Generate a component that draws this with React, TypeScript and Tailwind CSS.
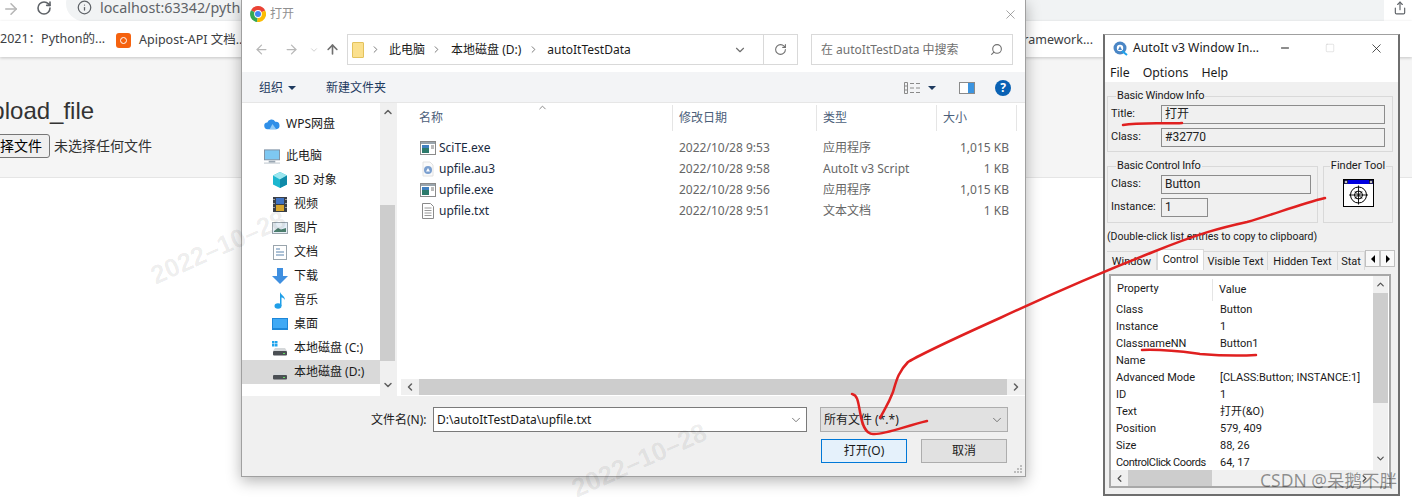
import { ArrowLeft, ArrowRight, ArrowUp, ChevronDown, ChevronLeft, ChevronRight, ChevronUp, Info, RotateCw, Search, X, Minus, Square, Share } from "lucide-react";
import type { ReactNode } from "react";

const SIDEBAR_FONT = "font-['Noto_Sans','Noto_Sans_CJK_SC',sans-serif]";

function ChromeLogo() {
  return (
    <svg width="16" height="16" viewBox="0 0 16 16">
      <path d="M8 8 L1 4.2 A8 8 0 0 1 15.2 4.5 Z" fill="#ea4335" />
      <path d="M8 8 L15.2 4.5 A8 8 0 0 1 7 16 Z" fill="#fbbc05" />
      <path d="M8 8 L7 16 A8 8 0 0 1 1 4.2 Z" fill="#34a853" />
      <circle cx="8" cy="8" r="3.9" fill="#fff" />
      <circle cx="8" cy="8" r="3" fill="#4285f4" />
    </svg>
  );
}

function ExeIcon() {
  return (
    <svg width="16" height="14" viewBox="0 0 16 14">
      <rect x="0.5" y="0.5" width="15" height="13" fill="#fff" stroke="#8a8a8a" />
      <rect x="1" y="1" width="14" height="2" fill="#9aa5ad" />
      <rect x="2" y="4" width="7" height="8" fill="#2c7a6b" />
      <rect x="2" y="4" width="7" height="3" fill="#3f7fbf" />
      <path d="M11 5h3M11 7h3" stroke="#777" />
    </svg>
  );
}

function Au3Icon() {
  return (
    <svg width="16" height="16" viewBox="0 0 16 16">
      <path d="M3 1h7l3 3v11H3z" fill="#fafafa" stroke="#e2e2e2" />
      <circle cx="8" cy="9" r="4" fill="#7b9fcf" />
      <path d="M6 10.5 8 7l2 3.5z" fill="#fff" />
    </svg>
  );
}

function TxtIcon() {
  return (
    <svg width="14" height="16" viewBox="0 0 14 16">
      <path d="M1.5.5h8l3 3v12h-11z" fill="#fff" stroke="#8a8a8a" />
      <path d="M3.5 5h7M3.5 7.5h7M3.5 10h7M3.5 12.5h7" stroke="#9a9a9a" />
    </svg>
  );
}

function CloudIcon() {
  return (
    <svg width="17" height="12" viewBox="0 0 17 12">
      <path d="M4 11.5a3.5 3.5 0 0 1-.5-7A4.6 4.6 0 0 1 12 3.6a3.9 3.9 0 0 1 1 7.9z" fill="#2f8fe8" />
      <path d="M6 11.5 9 6l4 5.5z" fill="#8fcaf7" />
    </svg>
  );
}

function PcIcon() {
  return (
    <svg width="17" height="15" viewBox="0 0 17 15">
      <rect x="0.5" y="0.5" width="16" height="10.5" fill="#7ec8f2" stroke="#7f8fa0" />
      <path d="M5 13h7" stroke="#9aa7b3" strokeWidth="2" />
      <path d="M0 14.5h17" stroke="#b9c2ca" />
    </svg>
  );
}

function CubeIcon() {
  return (
    <svg width="16" height="16" viewBox="0 0 16 16">
      <path d="M8 0l7 3.5v9L8 16l-7-3.5v-9z" fill="#1cb6cf" />
      <path d="M8 7.5 1 3.5 8 0l7 3.5z" fill="#9be6ef" />
      <path d="M8 7.5V16l7-3.5v-9z" fill="#0f8aa8" />
    </svg>
  );
}

function FilmIcon() {
  return (
    <svg width="14" height="15" viewBox="0 0 14 15">
      <rect width="14" height="15" fill="#3a3f47" />
      <rect x="3" y="1" width="8" height="6" fill="#3f73c4" />
      <rect x="3" y="8" width="8" height="6" fill="#d7a52c" />
      <path d="M1 2v1M1 6v1M1 10v1M13 2v1M13 6v1M13 10v1" stroke="#fff" />
    </svg>
  );
}

function PictureIcon() {
  return (
    <svg width="16" height="12" viewBox="0 0 16 12">
      <rect x="0.5" y="0.5" width="15" height="11" fill="#e6eef5" stroke="#9aa5ad" />
      <path d="M2 9l4-3 3 1.5 5-1.5v4H2z" fill="#4b7d6d" />
    </svg>
  );
}

function DocIcon() {
  return (
    <svg width="14" height="15" viewBox="0 0 14 15">
      <rect x="0.5" y="0.5" width="13" height="14" fill="#fff" stroke="#9aa5ad" />
      <path d="M3 4h4M3 7h8M3 10h8" stroke="#5b84ad" />
    </svg>
  );
}

function DownloadIcon() {
  return (
    <svg width="16" height="16" viewBox="0 0 16 16">
      <path d="M5 0h6v8h5l-8 8-8-8h5z" fill="#3f8fe0" />
    </svg>
  );
}

function NoteIcon() {
  return (
    <svg width="12" height="17" viewBox="0 0 12 17">
      <ellipse cx="4" cy="14" rx="3.5" ry="2.8" fill="#1f9fe8" />
      <path d="M6 14V0c1 3 5 4 5 8-1-2-3-2.5-3.5-2.5V14z" fill="#1f9fe8" />
    </svg>
  );
}

function DesktopIcon() {
  return (
    <svg width="16" height="12" viewBox="0 0 16 12">
      <rect width="16" height="12" fill="#1d86d8" />
      <rect x="1" y="1" width="14" height="9" fill="#3fa9f5" />
    </svg>
  );
}

function DriveIcon({ windows }: { windows?: boolean }) {
  return (
    <svg width="16" height="15" viewBox="0 0 16 15">
      {windows && (
        <g fill="#1fa3ec">
          <rect x="0" y="0" width="2.5" height="2.5" />
          <rect x="3" y="0" width="2.5" height="2.5" />
          <rect x="0" y="3" width="2.5" height="2.5" />
          <rect x="3" y="3" width="2.5" height="2.5" />
        </g>
      )}
      <path d="M3 7h10l2 3H1z" fill="#d5d8da" />
      <rect x="1" y="10" width="14" height="4.5" rx="1" fill="#4b4f54" />
      <rect x="11" y="12" width="2" height="1" fill="#5fe05f" />
    </svg>
  );
}

function AutoItLogo() {
  return (
    <svg width="15" height="15" viewBox="0 0 15 15" className="shrink-0">
      <circle cx="7" cy="7" r="6.5" fill="#4a86c5" />
      <circle cx="7" cy="7" r="3.2" fill="#fff" />
      <path d="M5 9 7 5l2 4z" fill="#4a86c5" />
      <path d="M9 10l5 4" stroke="#1fa3ec" strokeWidth="2" />
    </svg>
  );
}

function FinderIcon() {
  return (
    <svg width="31" height="28" viewBox="0 0 31 28">
      <rect x="0.5" y="0.5" width="30" height="27" fill="#fff" stroke="#000" />
      <rect x="1" y="1" width="29" height="4" fill="#0000e0" />
      <rect x="1.5" y="1.5" width="3" height="3" fill="#c0c0c0" stroke="#000" strokeWidth="0.6" />
      <rect x="26.5" y="1.5" width="3" height="3" fill="#c0c0c0" stroke="#000" strokeWidth="0.6" />
      <g fill="none" stroke="#000">
        <circle cx="15.5" cy="16" r="8" />
        <circle cx="15.5" cy="16" r="4" />
        <path d="M15.5 6.5v19M6 16h19M12 12.5l7 7M19 12.5l-7 7" strokeWidth="0.9" />
      </g>
    </svg>
  );
}

const SIDEBAR: { label: string; icon: ReactNode; indent?: boolean; gap?: boolean; active?: boolean }[] = [
  { label: "WPS网盘", icon: <CloudIcon />, gap: true },
  { label: "此电脑", icon: <PcIcon /> },
  { label: "3D 对象", icon: <CubeIcon />, indent: true },
  { label: "视频", icon: <FilmIcon />, indent: true },
  { label: "图片", icon: <PictureIcon />, indent: true },
  { label: "文档", icon: <DocIcon />, indent: true },
  { label: "下载", icon: <DownloadIcon />, indent: true },
  { label: "音乐", icon: <NoteIcon />, indent: true },
  { label: "桌面", icon: <DesktopIcon />, indent: true },
  { label: "本地磁盘 (C:)", icon: <DriveIcon windows />, indent: true },
  { label: "本地磁盘 (D:)", icon: <DriveIcon />, indent: true, active: true },
];

const FILES = [
  { name: "SciTE.exe", icon: <ExeIcon />, date: "2022/10/28 9:53", type: "应用程序", size: "1,015 KB" },
  { name: "upfile.au3", icon: <Au3Icon />, date: "2022/10/28 9:58", type: "AutoIt v3 Script", size: "1 KB" },
  { name: "upfile.exe", icon: <ExeIcon />, date: "2022/10/28 9:56", type: "应用程序", size: "1,015 KB" },
  { name: "upfile.txt", icon: <TxtIcon />, date: "2022/10/28 9:51", type: "文本文档", size: "1 KB" },
];

const PROPS = [
  ["Class", "Button"],
  ["Instance", "1"],
  ["ClassnameNN", "Button1"],
  ["Name", ""],
  ["Advanced Mode", "[CLASS:Button; INSTANCE:1]"],
  ["ID", "1"],
  ["Text", "打开(&O)"],
  ["Position", "579, 409"],
  ["Size", "88, 26"],
  ["ControlClick Coords", "64, 17"],
];

function Browser() {
  return (
    <div className="flex flex-col h-full font-['Liberation_Sans','Noto_Sans_CJK_SC',sans-serif]">
      <div className="h-[21px] shrink-0 flex items-start overflow-hidden bg-white">
        <ArrowRight size={18} className="ml-[2px] text-[#b5b5b5]" strokeWidth={2} />
        <RotateCw size={16} className="ml-[16px] text-[#5f6368]" strokeWidth={2.4} />
        <div className="ml-[14px] mt-[-14px] h-[35px] w-[1318px] rounded-l-full bg-[#f1f3f4] flex items-end pb-[6px] pl-[11px] text-[#5f6368]">
          <Info size={15} />
          <span className="ml-[8px] font-['Noto_Sans'] text-[14.3px] leading-[20px] mb-[-3px]">localhost:63342/pyth</span>
        </div>
      </div>
      <div className="h-[36px] shrink-0 bg-white flex items-center pt-[2px] text-[12.5px] text-[#3c4043] shadow-[0_1px_3px_rgba(0,0,0,0.2)] relative font-['Noto_Sans','Noto_Sans_CJK_SC',sans-serif]">
        <span className="w-[116px] pb-[1px]">2021：Python的...</span>
        <span className="w-[15px] h-[15px] rounded-[3px] bg-[#f5620f] flex items-center justify-center">
          <span className="w-[7px] h-[7px] rounded-full border border-white" />
        </span>
        <span className="ml-[8px]">Apipost-API 文档...</span>
        <span className="ml-auto mr-[319px]">framework...</span>
      </div>
      <div className="h-[121px] shrink-0 bg-[#f5f5f5] border-b border-[#e5e5e5] pt-[40px]">
        <div className="ml-[-22px] text-[24px] leading-[28px] text-[#333]">upload_file</div>
        <div className="mt-[9px] ml-[-22px] flex items-center text-[14px] text-[#333]">
          <span className="h-[24px] w-[72px] border border-[#767676] rounded-[3px] bg-[#efefef] text-center leading-[22px] text-black">选择文件</span>
          <span className="ml-[4px]">未选择任何文件</span>
        </div>
      </div>
      <div className="flex-1 bg-white" />
    </div>
  );
}

function FileDialog() {
  return (
    <div className={`absolute left-[241px] top-0 w-[785px] h-[477px] flex flex-col bg-white border-x border-b border-[#a0a0a0] shadow-[0_4px_14px_rgba(0,0,0,0.3)] text-[12px] ${SIDEBAR_FONT}`}>
      <div className="h-[27px] shrink-0 flex items-center pl-[8px] pr-[7px] pt-[1px]">
        <ChromeLogo />
        <span className="ml-[4px] text-[#909090]">打开</span>
        <X size={15} strokeWidth={1} className="ml-auto text-[#707070]" />
      </div>
      <div className="h-[45px] shrink-0 flex items-center pl-[12px] py-[7px] text-[#b8b8b8]">
        <ArrowLeft size={15} />
        <ArrowRight size={15} className="ml-[15px]" />
        <ChevronDown size={10} className="ml-[10px] text-[#c8c8c8]" />
        <ArrowUp size={15} strokeWidth={2.6} className="ml-[6px] text-[#707070]" />
        <div className="ml-[7px] h-[31px] w-[451px] border border-[#d9d9d9] flex items-center text-[#1a1a1a] shrink-0">
          <span className="ml-[4px] w-[12px] h-[16px] bg-[#fbe08d] border border-[#e3c25c] rounded-[1px]" />
          <ChevronRight size={11} className="ml-[6px] text-[#707070]" />
          <span className="ml-[8px]">此电脑</span>
          <ChevronRight size={11} className="ml-[6px] text-[#707070]" />
          <span className="ml-[9px]">本地磁盘 (D:)</span>
          <ChevronRight size={11} className="ml-[7px] text-[#707070]" />
          <span className="ml-[8px]">autoItTestData</span>
          <ChevronDown size={14} className="ml-auto mr-[16px] text-[#707070]" />
          <div className="h-full w-[34px] border-l border-[#d9d9d9] flex items-center justify-center">
            <RotateCw size={13} className="text-[#707070]" />
          </div>
        </div>
        <div className="ml-[13px] h-[31px] w-[202px] border border-[#d9d9d9] flex items-center px-[9px] text-[#707070] shrink-0">
          <span>在 autoItTestData 中搜索</span>
          <Search size={13} className="ml-auto scale-x-[-1]" />
        </div>
      </div>
      <div className="h-[31px] shrink-0 bg-[#f3f4f6] border-b border-[#e6e6e6] flex items-center pl-[17px] pr-[14px] pt-[1px] text-[#1e3a5f]">
        <span>组织</span>
        <span className="ml-[5px] border-x-[4px] border-x-transparent border-t-[4px] border-t-[#1e3a5f]" />
        <span className="ml-[30px]">新建文件夹</span>
        <svg className="ml-auto" width="16" height="12" viewBox="0 0 16 12">
          <path d="M0.5 0.5h3v11h-3zM0.5 4h3M0.5 8h3M6 1.5h4M12 1.5h4M6 6h4M12 6h4M6 10.5h4M12 10.5h4" fill="none" stroke="#8a8a8a" />
        </svg>
        <span className="ml-[8px] border-x-[4px] border-x-transparent border-t-[4px] border-t-[#1e3a5f]" />
        <svg className="ml-[23px]" width="16" height="12" viewBox="0 0 16 12">
          <rect x="0.5" y="0.5" width="15" height="11" fill="#fff" stroke="#8a8a8a" />
          <rect x="9" y="1" width="6" height="10" fill="#3b94e0" />
        </svg>
        <span className="ml-[20px] w-[16px] h-[16px] rounded-full bg-[#0a62b4] text-white font-bold text-[12px] leading-[16px] text-center">?</span>
      </div>
      <div className="h-[293px] shrink-0 flex">
        <div className="w-[155px] shrink-0 flex border-r-[2px] border-[#f0f0f0]">
          <div className="w-[139px] pt-[9px] text-[#1a1a1a]">
            {SIDEBAR.map((item) => (
              <div key={item.label} className={`${item.gap ? "mb-[8px]" : ""} h-[24px] flex items-center ${item.indent ? "pl-[30px]" : "pl-[22px]"} ${item.active ? "bg-[#d9d9d9]" : ""}`}>
                <span className="w-[16px] flex justify-center shrink-0">{item.icon}</span>
                <span className="ml-[6px]">{item.label}</span>
              </div>
            ))}
          </div>
          <div className="w-[15px] flex flex-col items-center bg-[#f0f0f0]">
            <ChevronUp size={12} strokeWidth={3} className="mt-[3px] text-[#606060]" />
            <div className="mt-[87px] h-[156px] w-full bg-[#cdcdcd]" />
            <ChevronDown size={12} strokeWidth={3} className="mt-[18px] text-[#606060]" />
          </div>
        </div>
        <div className="flex-1 flex flex-col pl-[4px] min-w-0">
          <div className="h-[28px] shrink-0 flex pt-[2px] text-[#4c607a]">
            <span className="w-[272px] pl-[18px] border-r border-[#e5e5e5] flex items-center relative">
              名称
              <ChevronUp size={11} className="absolute left-[136px] top-[-3px] text-[#808080]" />
            </span>
            <span className="w-[144px] pl-[6px] border-r border-[#e5e5e5] flex items-center">修改日期</span>
            <span className="w-[120px] pl-[6px] border-r border-[#e5e5e5] flex items-center">类型</span>
            <span className="w-[80px] pl-[6px] border-r border-[#e5e5e5] flex items-center">大小</span>
          </div>
          <div className="flex-1 pt-[6px]">
            {FILES.map((f) => (
              <div key={f.name} className="h-[21px] flex items-center text-[#666]">
                <span className="w-[272px] pl-[19px] flex items-center text-[#1a2a40]">
                  <span className="w-[16px] flex justify-center">{f.icon}</span>
                  <span className="ml-[3px]">{f.name}</span>
                </span>
                <span className="w-[144px] pl-[6px]">{f.date}</span>
                <span className="w-[120px] pl-[6px]">{f.type}</span>
                <span className="w-[72px] text-right">{f.size}</span>
              </div>
            ))}
          </div>
          <div className="h-[16px] mb-[1px] shrink-0 flex items-center bg-[#f0f0f0] text-[#606060]">
            <ChevronLeft size={12} strokeWidth={3} className="mx-[3px]" />
            <div className="h-full flex-1 bg-[#cdcdcd]" />
            <ChevronRight size={12} strokeWidth={3} className="mx-[3px]" />
          </div>
        </div>
      </div>
      <div className="flex-1 bg-[#f0f0f0] relative text-[#1a1a1a]">
        <div className="flex items-center mt-[11px] pl-[129px]">
          <span className="w-[62px]">文件名(N):</span>
          <div className="w-[374px] h-[25px] border border-[#7a7a7a] bg-white flex items-center pl-[3px]">
            <span>D:\autoItTestData\upfile.txt</span>
            <ChevronDown size={14} strokeWidth={1.4} className="ml-auto mr-[3px] text-[#606060]" />
          </div>
          <div className="ml-[13px] w-[188px] h-[25px] border border-[#adadad] bg-[#e1e1e1] flex items-center pl-[3px]">
            <span>所有文件 (*.*)</span>
            <ChevronDown size={14} strokeWidth={1.4} className="ml-auto mr-[3px] text-[#606060]" />
          </div>
        </div>
        <div className="flex mt-[7px] pl-[579px]">
          <span className="w-[86px] h-[24px] border border-[#0078d7] bg-[#e5f1fb] text-center leading-[22px]">打开(O)</span>
          <span className="ml-[14px] w-[86px] h-[24px] border border-[#adadad] bg-[#e1e1e1] text-center leading-[22px]">取消</span>
        </div>
        <svg className="absolute right-[2px] bottom-[2px]" width="9" height="9" viewBox="0 0 9 9" fill="#bdbdbd">
          <rect x="6" y="0" width="2" height="2" />
          <rect x="3" y="3" width="2" height="2" />
          <rect x="6" y="3" width="2" height="2" />
          <rect x="0" y="6" width="2" height="2" />
          <rect x="3" y="6" width="2" height="2" />
          <rect x="6" y="6" width="2" height="2" />
        </svg>
      </div>
    </div>
  );
}

function Field({ label, value, width, gap = "mt-[4px]" }: { label: string; value: string; width: string; gap?: string }) {
  return (
    <div className={`flex items-center ${gap}`}>
      <span className="w-[52px] pl-[2px] shrink-0">{label}</span>
      <span className={`${width} h-[19px] border border-[#8c8c8c] pl-[3px] text-[12px] leading-[17px] text-[#222] shrink-0`}>{value}</span>
    </div>
  );
}

function Inspector() {
  return (
    <div className="absolute left-[1103px] top-[34px] w-[297px] h-[462px] flex flex-col bg-[#f0f0f0] border-2 border-[#6e6e6e] border-t-[#a0a0a0] border-t-[1px] text-[11px] text-[#1a1a1a] font-['Roboto','Noto_Sans_CJK_SC',sans-serif]">
      <div className="h-[47px] shrink-0 bg-white flex flex-col">
        <div className="h-[31px] flex items-center pl-[8px]">
          <AutoItLogo />
          <span className="ml-[5px] font-['Noto_Sans'] text-[12.2px]">AutoIt v3 Window In...</span>
          <Minus size={12} className="ml-[20px]" />
          <Square size={10} strokeWidth={1} className="ml-[34px] text-[#c0c0c0]" />
          <X size={15} strokeWidth={1.2} className="ml-[34px]" />
        </div>
        <div className="flex pl-[5px] gap-[13px] text-[12.3px] font-['Noto_Sans'] mt-[2px]">
          <span>File</span>
          <span>Options</span>
          <span>Help</span>
        </div>
      </div>
      <fieldset className="mt-[7px] ml-[2px] w-[286px] h-[63px] border border-[#d9d9d9] pl-[1px]">
        <legend className="ml-[7px] px-[1px] tracking-[-0.2px] leading-[14px]">Basic Window Info</legend>
        <Field label="Title:" value="打开" width="w-[224px]" gap="mt-[2px]" />
        <Field label="Class:" value="#32770" width="w-[224px]" />
      </fieldset>
      <div className="flex mt-[7px] ml-[2px]">
        <fieldset className="w-[211px] h-[64px] border border-[#d9d9d9] pl-[1px]">
          <legend className="ml-[7px] px-[1px] tracking-[-0.2px] leading-[14px]">Basic Control Info</legend>
          <Field label="Class:" value="Button" width="w-[150px]" gap="mt-[2px]" />
          <Field label="Instance:" value="1" width="w-[47px]" gap="mt-[4px]" />
        </fieldset>
        <fieldset className="ml-[5px] w-[70px] h-[64px] border border-[#d9d9d9]">
          <legend className="mx-auto px-[1px] leading-[14px] whitespace-nowrap">Finder Tool</legend>
          <div className="flex justify-center mt-[6px]"><FinderIcon /></div>
        </fieldset>
      </div>
      <div className="mt-[7px] ml-[2px] text-[10.5px] leading-[14px]">(Double-click list entries to copy to clipboard)</div>
      <div className="mt-[6px] ml-[2px] h-[20px] flex items-end">
        {[
          ["Window", "w-[50px]"],
          ["Control", "w-[47px]"],
          ["Visible Text", "w-[64px]"],
          ["Hidden Text", "w-[70px]"],
          ["Stat", "w-[27px]"],
        ].map(([t, w]) =>
          t === "Control" ? (
            <span key={t} className={`${w} h-[21px] bg-white border-x border-t border-[#d9d9d9] text-center leading-[19px]`}>{t}</span>
          ) : (
            <span key={t} className={`${w} h-[19px] border-r border-t border-[#d9d9d9] text-center leading-[20px] overflow-hidden`}>{t}</span>
          ),
        )}
        <span className="w-[15px] h-[17px] bg-[#f8f8f8] border border-[#c0c0c0] flex items-center justify-center self-start">
          <span className="border-y-[4px] border-y-transparent border-r-[4px] border-r-black" />
        </span>
        <span className="w-[15px] h-[17px] bg-[#f8f8f8] border border-[#c0c0c0] flex items-center justify-center self-start">
          <span className="border-y-[4px] border-y-transparent border-l-[4px] border-l-black" />
        </span>
      </div>
      <div className="mt-[4px] ml-[4px] w-[282px] h-[214px] border-2 border-[#a8a8a8] bg-white flex flex-col">
        <div className="flex-1 flex min-h-0">
          <div className="flex-1 min-w-0 pl-[5px] pt-[2px]">
            <div className="h-[24px] flex items-center">
              <span className="w-[97px] pl-[1px] border-r border-[#e5e5e5] h-[22px] leading-[20px]">Property</span>
              <span className="pl-[6px]">Value</span>
            </div>
            {PROPS.map(([k, v]) => (
              <div key={k} className="h-[17px] flex items-center whitespace-nowrap">
                <span className={`w-[104px] shrink-0 ${k === "ControlClick Coords" ? "tracking-[-0.4px]" : ""}`}>{k}</span>
                <span>{v}</span>
              </div>
            ))}
          </div>
          <div className="w-[15px] mr-[1px] shrink-0 bg-[#f0f0f0] flex flex-col items-center">
            <ChevronUp size={11} strokeWidth={2.6} className="mt-[3px] text-[#505050]" />
            <div className="mt-[3px] h-[110px] w-full bg-[#cdcdcd]" />
            <ChevronDown size={11} strokeWidth={2.6} className="mt-[50px] text-[#505050]" />
          </div>
        </div>
        <div className="h-[16px] shrink-0 bg-[#f0f0f0] flex items-center mr-[1px]">
          <ChevronLeft size={11} strokeWidth={2.6} className="ml-[3px] text-[#505050]" />
          <div className="ml-[3px] w-[84px] h-full bg-[#cdcdcd]" />
          <ChevronRight size={11} strokeWidth={2.6} className="ml-auto mr-[18px] text-[#505050]" />
        </div>
      </div>
    </div>
  );
}

export default function App() {
  return (
    <div className="relative w-[1412px] h-[497px] overflow-hidden bg-white">
      <Browser />
      <Share size={14} className="absolute left-[1393px] top-[1px] text-[#5f6368]" />
      <FileDialog />
      <Inspector />

      {/* watermarks */}
      <span className="absolute left-[146px] top-[228px] -rotate-[24deg] text-[26px] font-bold text-black/[0.08] font-['Liberation_Sans',sans-serif] whitespace-nowrap">2022–10–28</span>
      <span className="absolute left-[567px] top-[441px] -rotate-[24deg] text-[26px] font-bold text-black/[0.08] font-['Liberation_Sans',sans-serif] whitespace-nowrap">2022–10–28</span>
      <span className="absolute left-[1260px] top-[467px] text-[17.5px] text-black/[0.42] font-['Noto_Sans','Noto_Sans_CJK_SC',sans-serif] whitespace-nowrap">CSDN @呆鹅不胖</span>

      {/* red pen marks */}
      <svg className="absolute inset-0" width="1412" height="497" viewBox="0 0 1412 497" fill="none" stroke="#e02020" strokeWidth="2.5" strokeLinecap="round" strokeLinejoin="round">
        <path d="M1123 125C1140 122 1165 124 1182 123" />
        <path d="M1142 350C1165 349 1185 352 1200 354C1225 356 1240 356 1256 355" />
        <path d="M1325 198C1300 204 1275 214 1247 222C1220 228 1200 233 1153 252C1120 265 1060 290 1000 318C960 336 925 352 908 362C898 372 896 382 893 392C888 405 884 410 880 418" />
        <path d="M852 394C857 395 858 400 860 412C862 424 865 434 873 434C885 435 905 426 927 421" />
      </svg>
    </div>
  );
}
